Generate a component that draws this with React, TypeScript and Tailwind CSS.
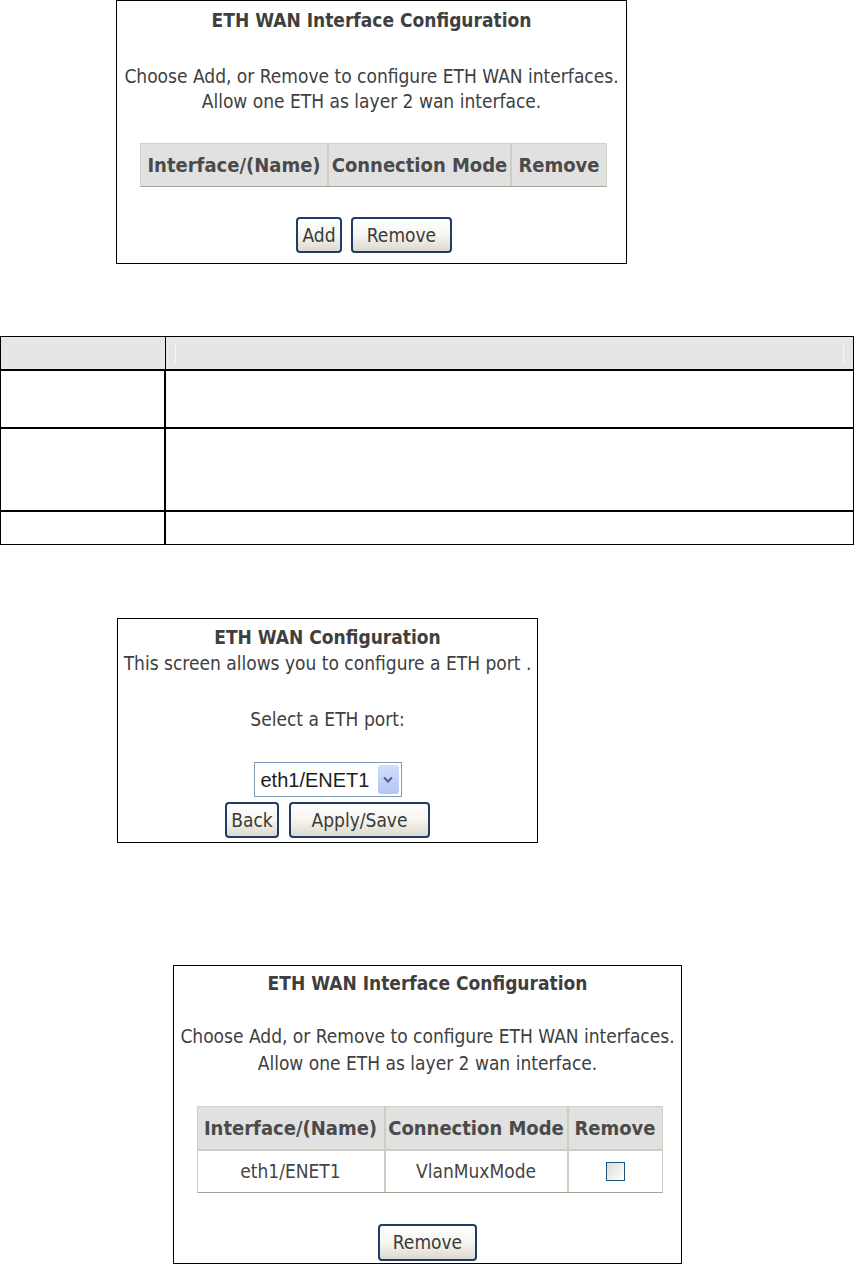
import React from "react";

// XP-style push button used on the router pages
function XpButton({
  children,
  className = "",
}: {
  children: React.ReactNode;
  className?: string;
}) {
  return (
    <button
      className={`flex items-center justify-center rounded-[4px] border-2 border-[#203c64] bg-linear-to-b from-white via-[#f6f5f0] to-[#dcd9ce] text-[19px] leading-none text-[#3a3a3a] ${className}`}
    >
      {children}
    </button>
  );
}

function HeadCell({
  children,
  className = "",
}: {
  children: React.ReactNode;
  className?: string;
}) {
  return (
    <div
      className={`flex items-center justify-center bg-[#e1e1e1] text-[20px] font-bold text-[#4a4a4a] ${className}`}
    >
      {children}
    </div>
  );
}

function BodyCell({
  children,
  className = "",
}: {
  children: React.ReactNode;
  className?: string;
}) {
  return (
    <div
      className={`flex items-center justify-center bg-white text-[19px] text-[#444] ${className}`}
    >
      {children}
    </div>
  );
}

function InterfaceHeader() {
  return (
    <div className="flex h-[42px]">
      <HeadCell className="w-[188px] border-r-2 border-[#cfccc0]">
        Interface/(Name)
      </HeadCell>
      <HeadCell className="w-[183px] border-r-2 border-[#cfccc0]">
        Connection Mode
      </HeadCell>
      <HeadCell className="flex-1">Remove</HeadCell>
    </div>
  );
}

export default function App() {
  return (
    <div className="flex h-[1264px] w-[854px] flex-col overflow-hidden bg-white font-['DejaVu_Sans_Condensed','DejaVu_Sans',sans-serif] text-[#404040]">
      {/* Screen 1: empty interface list */}
      <div className="ml-[116px] flex h-[264px] w-[511px] flex-col items-center border border-black">
        <div className="mt-[7px] text-[19px] font-bold leading-[24px] text-[#3f3f3f]">
          ETH WAN Interface Configuration
        </div>
        <div className="mt-[32px] whitespace-nowrap text-center text-[19px] leading-[25px]">
          <div>Choose Add, or Remove to configure ETH WAN interfaces.</div>
          <div>Allow one ETH as layer 2 wan interface.</div>
        </div>
        <div className="ml-[4px] mt-[29px] h-[44px] w-[467px] border border-[#d2cfc3] border-b-[#a6a398]">
          <InterfaceHeader />
        </div>
        <div className="ml-[5px] mt-[30px] flex gap-[9px]">
          <XpButton className="h-[36px] w-[46px]">Add</XpButton>
          <XpButton className="h-[36px] w-[101px]">Remove</XpButton>
        </div>
      </div>

      {/* Description table (text blanked) */}
      <div className="mt-[72px] w-full border border-black">
        <div className="flex h-[34px] border-b-2 border-black bg-[#e6e6e6]">
          <div className="w-[165px] border-r border-black" />
          <div className="flex-1 px-[9px] py-[6px]">
            <div className="h-full border-x border-[#f6f6f6]" />
          </div>
        </div>
        <div className="flex h-[58px] border-b-2 border-black">
          <div className="w-[165px] border-r-2 border-black" />
          <div className="flex-1" />
        </div>
        <div className="flex h-[83px] border-b-2 border-black">
          <div className="w-[165px] border-r-2 border-black" />
          <div className="flex-1" />
        </div>
        <div className="flex h-[32px]">
          <div className="w-[165px] border-r-2 border-black" />
          <div className="flex-1" />
        </div>
      </div>

      {/* Screen 2: select a port */}
      <div className="ml-[117px] mt-[73px] flex h-[225px] w-[421px] flex-col items-center border border-black">
        <div className="mt-[6px] text-[19px] font-bold leading-[24px] text-[#3f3f3f]">
          ETH WAN Configuration
        </div>
        <div className="mt-[2px] whitespace-nowrap text-[19px] leading-[24px]">
          This screen allows you to configure a ETH port .
        </div>
        <div className="mt-[32px] text-[19px] leading-[24px]">
          Select a ETH port:
        </div>
        <div className="mt-[31px] flex h-[35px] w-[148px] items-center border border-[#7f9db9] bg-white pl-[6px] pr-[2px]">
          <span className="flex-1 font-['Liberation_Sans',Arial,sans-serif] text-[20px] leading-none text-[#1c1c1c]">
            eth1/ENET1
          </span>
          <span className="flex h-[29px] w-[21px] items-center justify-center rounded-[3px] bg-linear-to-b from-[#d3defc] to-[#b3c5f3]">
            <svg width="10" height="7" viewBox="0 0 10 7">
              <path
                d="M1 1.5 L5 5.5 L9 1.5"
                fill="none"
                stroke="#4d6185"
                strokeWidth="2"
              />
            </svg>
          </span>
        </div>
        <div className="mt-[5px] flex gap-[10px]">
          <XpButton className="h-[36px] w-[54px]">Back</XpButton>
          <XpButton className="h-[36px] w-[141px]">Apply/Save</XpButton>
        </div>
      </div>

      {/* Screen 3: interface added */}
      <div className="ml-[173px] mt-[122px] flex h-[299px] w-[509px] flex-col items-center border border-black">
        <div className="mt-[5px] text-[19px] font-bold leading-[24px] text-[#3f3f3f]">
          ETH WAN Interface Configuration
        </div>
        <div className="mt-[28px] whitespace-nowrap text-center text-[19px] leading-[27px]">
          <div>Choose Add, or Remove to configure ETH WAN interfaces.</div>
          <div>Allow one ETH as layer 2 wan interface.</div>
        </div>
        <div className="ml-[4px] mt-[29px] w-[466px] border border-[#d2cfc3] border-b-[#a6a398]">
          <InterfaceHeader />
          <div className="flex h-[43px] border-t-2 border-[#cfccc0]">
            <BodyCell className="w-[188px] border-r-2 border-[#cfccc0]">
              eth1/ENET1
            </BodyCell>
            <BodyCell className="w-[183px] border-r-2 border-[#cfccc0]">
              VlanMuxMode
            </BodyCell>
            <BodyCell className="flex-1">
              <span className="block h-[19px] w-[19px] border border-[#1c5180] bg-linear-to-br from-[#dcdcd7] to-white" />
            </BodyCell>
          </div>
        </div>
        <XpButton className="mt-[31px] h-[37px] w-[99px]">Remove</XpButton>
      </div>
    </div>
  );
}
